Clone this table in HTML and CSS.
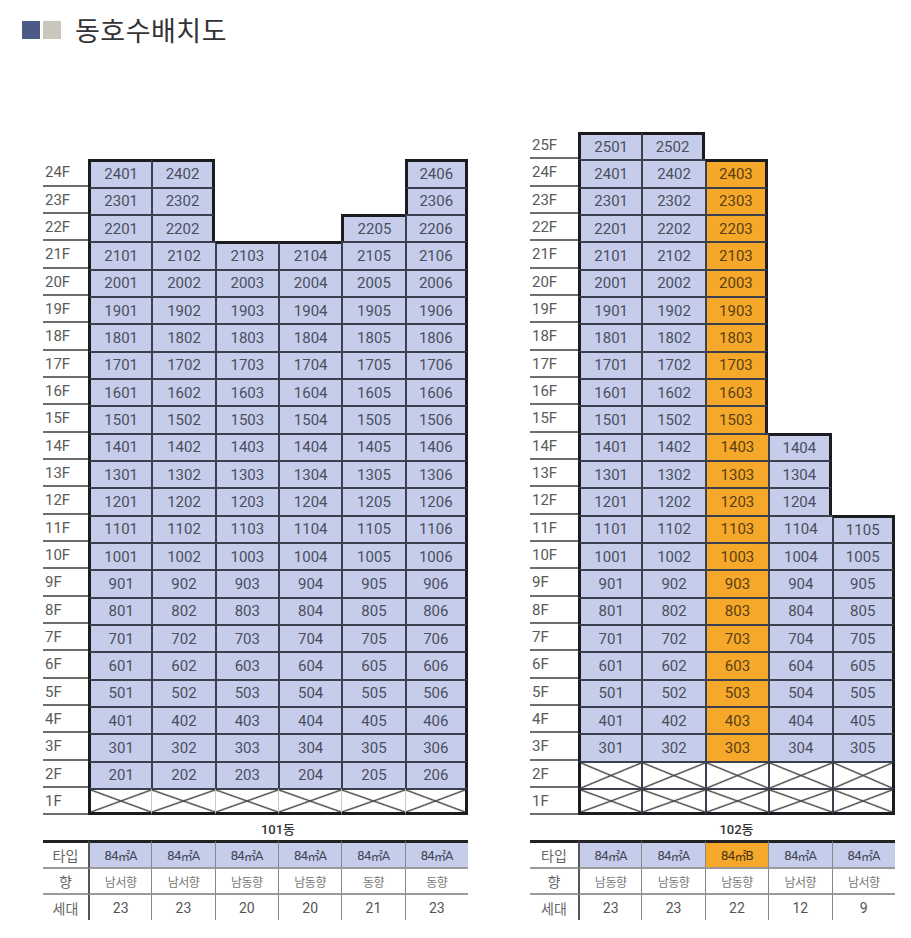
FILE: index.html
```html
<!DOCTYPE html>
<html lang="ko">
<head>
<meta charset="utf-8">
<title>동호수배치도</title>
<link rel="stylesheet" href="styles.css">
</head>
<body>
<div class="page">
  <div class="title">
    <span class="sq sq-navy"></span><span class="sq sq-gray"></span>
    <h1 class="title-text">동호수배치도</h1>
  </div>
  <div class="bldgs">
    <div class="bldg b101" id="b101"></div>
    <div class="bldg b102" id="b102"></div>
  </div>
</div>
<script src="app.js"></script>
</body>
</html>
```

FILE: styles.css
```css
html, body { margin: 0; padding: 0; background: #fff; }
body { font-family: Roboto, "Noto Sans CJK KR", sans-serif; color: #444; }
.page { width: 911px; }

.title { display: flex; align-items: center; padding: 16px 0 0 22px; height: 27px; }
.sq { width: 18px; height: 18px; display: block; }
.sq-navy { background: #4d5a86; margin-right: 3px; }
.sq-gray { background: #c9c6bb; }
.title-text { margin: 0 0 0 14px; font-family: "Noto Sans CJK KR", sans-serif; font-weight: 400; font-size: 27px; line-height: 27px; color: #333; letter-spacing: 0.5px; }

.bldgs { display: flex; align-items: flex-end; margin-top: 89px; padding-left: 43px; gap: 62px; }

.bldg { display: grid; }
.b101 { grid-template-columns: 45px repeat(6, 63.33px); grid-template-rows: repeat(24, 27.33px) 25px 29px 26px 25px; }
.b102 { grid-template-columns: 48px repeat(5, 63.4px); grid-template-rows: repeat(25, 27.33px) 25px 29px 26px 25px; }

.floor { border-bottom: 2px solid #6e6e6e; color: #5a5a5a; font-size: 15px; display: flex; align-items: center; padding-left: 2px; padding-top: 1px; box-sizing: border-box; }

.unit { box-sizing: border-box; border-top: 2px solid #3c404e; border-left: 2px solid #3c404e; display: flex; align-items: center; justify-content: center; font-size: 15px; }
.blue { background: #c6cdea; color: #4a4e60; }
.orange { background: #f6a82a; color: #5a3f12; }
.piloti {
  background:
    linear-gradient(to top right, transparent calc(50% - 1.4px), #454545 50%, transparent calc(50% + 1.4px)),
    linear-gradient(to bottom right, transparent calc(50% - 1.4px), #454545 50%, transparent calc(50% + 1.4px)),
    #fff;
}
.b101 .piloti { border-left-color: #c8c8c8; border-left-width: 1px; }
.unit.edge-t { border-top: 3px solid #1c1c20; }
.unit.edge-l { border-left: 3px solid #1c1c20; }
.unit.edge-r { border-right: 3px solid #1c1c20; }
.unit.edge-b { border-bottom: 3px solid #1c1c20; }

.cap { display: flex; align-items: center; justify-content: center; font-size: 13px; font-weight: 500; color: #333; padding-top: 1px; }

.tcell { box-sizing: border-box; display: flex; align-items: center; justify-content: center; }
.row1 { border-top: 3px solid #222; border-bottom: 2px solid #9a9a9a; }
.row2 { border-bottom: 2px solid #9a9a9a; }
.tlab { color: #666; font-family: "Noto Sans CJK KR", sans-serif; font-size: 14px; }
.tval { border-left: 1px solid #888; }
.tval.first { border-left: 2px solid #555; }
.tval.type { font-size: 13px; color: #414556; letter-spacing: -0.6px; }
.tval.type.blue { background: #c6cdea; }
.tval.type.orange { background: #f6a82a; color: #4a3510; }
.tval.dir { font-family: "Noto Sans CJK KR", sans-serif; font-size: 12px; color: #777; letter-spacing: -0.5px; }
.tval.cnt { font-size: 14px; color: #555; }
.sqm { font-family: "Noto Sans CJK KR", sans-serif; font-size: 12px; letter-spacing: -1px; }
```

FILE: app.js
```js
const buildings = [
  {
    id: 'b101', name: '101동', cols: 6, floors: 24, piloti: [1],
    occ: (f, c) => f <= 21 || (f === 22 ? [1, 2, 5, 6].includes(c) : [1, 2, 6].includes(c)),
    orange: () => false,
    type: ['A', 'A', 'A', 'A', 'A', 'A'],
    dir: ['남서향', '남서향', '남동향', '남동향', '동향', '동향'],
    cnt: [23, 23, 20, 20, 21, 23]
  },
  {
    id: 'b102', name: '102동', cols: 5, floors: 25, piloti: [1, 2],
    occ: (f, c) => f <= 11 || (f <= 14 ? c <= 4 : (f <= 24 ? c <= 3 : c <= 2)),
    orange: (f, c) => c === 3,
    type: ['A', 'A', 'B', 'A', 'A'],
    dir: ['남동향', '남동향', '남동향', '남서향', '남서향'],
    cnt: [23, 23, 22, 12, 9]
  }
];

function el(cls, text) {
  const d = document.createElement('div');
  d.className = cls;
  if (text !== undefined) d.textContent = text;
  return d;
}

for (const b of buildings) {
  const g = document.getElementById(b.id);
  const has = (f, c) => f >= 1 && f <= b.floors && c >= 1 && c <= b.cols && b.occ(f, c);
  for (let f = b.floors; f >= 1; f--) {
    g.appendChild(el('floor', f + 'F'));
    for (let c = 1; c <= b.cols; c++) {
      if (!has(f, c)) { g.appendChild(el('empty')); continue; }
      const pil = b.piloti.includes(f);
      const cls = ['unit'];
      if (pil) cls.push('piloti');
      else cls.push(b.orange(f, c) ? 'orange' : 'blue');
      if (!has(f + 1, c)) cls.push('edge-t');
      if (!has(f, c - 1)) cls.push('edge-l');
      if (!has(f, c + 1)) cls.push('edge-r');
      if (!has(f - 1, c)) cls.push('edge-b');
      g.appendChild(el(cls.join(' '), pil ? undefined : String(f * 100 + c)));
    }
  }
  g.appendChild(el('empty'));
  const cap = el('cap', b.name);
  cap.style.gridColumn = 'span ' + b.cols;
  g.appendChild(cap);

  g.appendChild(el('tcell tlab row1', '타입'));
  for (let c = 1; c <= b.cols; c++) {
    const t = b.type[c - 1];
    const d = el('tcell tval type row1 ' + (c === 1 ? 'first ' : '') + (t === 'B' ? 'orange' : 'blue'));
    d.appendChild(document.createTextNode('84'));
    const s = document.createElement('span');
    s.className = 'sqm';
    s.textContent = '㎡';
    d.appendChild(s);
    d.appendChild(document.createTextNode(t));
    g.appendChild(d);
  }
  g.appendChild(el('tcell tlab row2', '향'));
  for (let c = 1; c <= b.cols; c++) {
    g.appendChild(el('tcell tval dir row2' + (c === 1 ? ' first' : ''), b.dir[c - 1]));
  }
  g.appendChild(el('tcell tlab row3', '세대'));
  for (let c = 1; c <= b.cols; c++) {
    g.appendChild(el('tcell tval cnt row3' + (c === 1 ? ' first' : ''), String(b.cnt[c - 1])));
  }
}
```
